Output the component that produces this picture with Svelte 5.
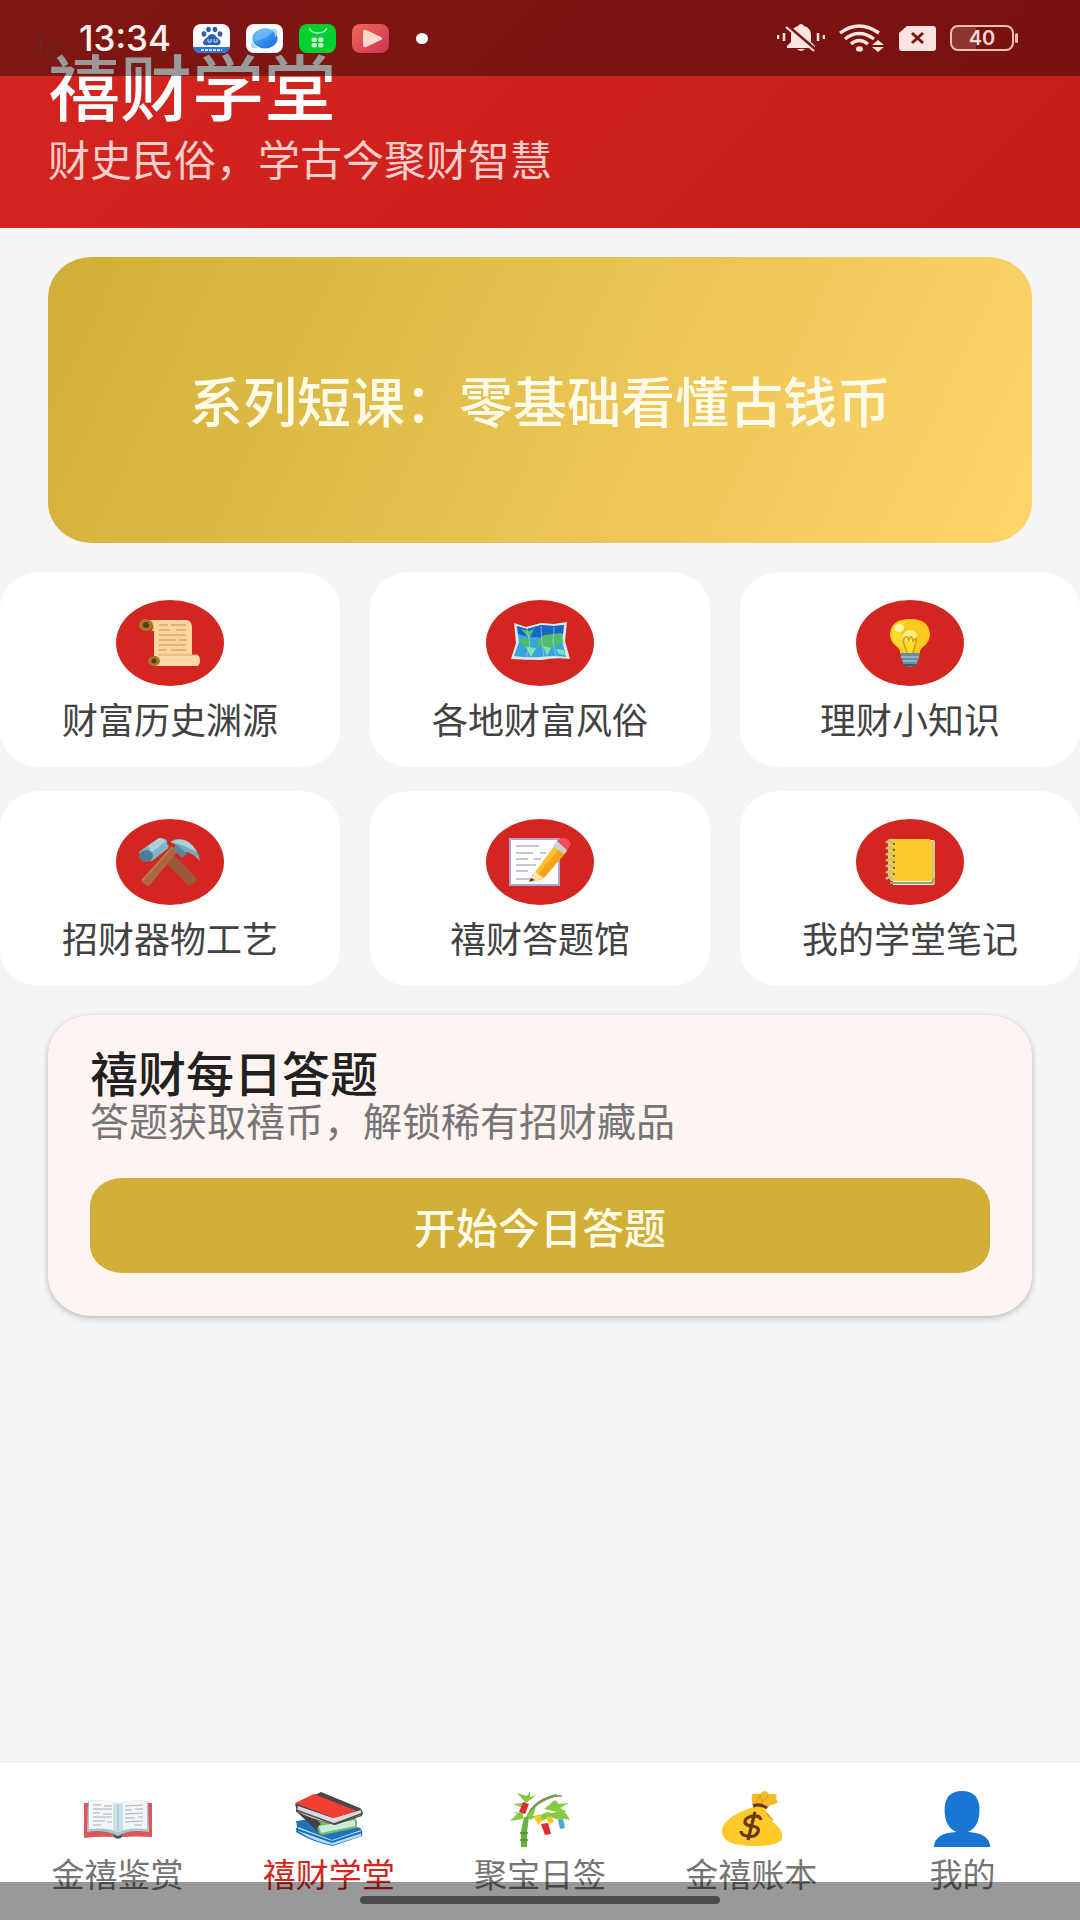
<script lang="ts">
  type Entry = { icon: string; label: string };

  const topics: Entry[] = [
    { icon: 'scroll', label: '财富历史渊源' },
    { icon: 'map', label: '各地财富风俗' },
    { icon: 'bulb', label: '理财小知识' },
    { icon: 'tools', label: '招财器物工艺' },
    { icon: 'memo', label: '禧财答题馆' },
    { icon: 'notebook', label: '我的学堂笔记' }
  ];

  const tabs: Entry[] = [
    { icon: 'book', label: '金禧鉴赏' },
    { icon: 'books', label: '禧财学堂' },
    { icon: 'bamboo', label: '聚宝日签' },
    { icon: 'bag', label: '金禧账本' },
    { icon: 'person', label: '我的' }
  ];

  let active = $state('books');
</script>

<div class="page">
  <div class="status">
    <span class="ghost">1e</span>
    <div class="status-left">
      <span class="time">13:34</span>
      <svg class="app" viewBox="0 0 37 29" aria-hidden="true">
        <rect width="37" height="29" rx="8" fill="#fff" />
        <path d="M0 23h37q-1 6-8 6H8q-7 0-8-6z" fill="#2f72d8" />
        <path d="M8 26h21" stroke="#cfe0ff" stroke-width="2" stroke-dasharray="3 1" />
        <g fill="#2b5fb0">
          <ellipse cx="11" cy="10" rx="2.4" ry="2.8" />
          <ellipse cx="15.5" cy="5.5" rx="2.3" ry="2.7" />
          <ellipse cx="22" cy="5.5" rx="2.3" ry="2.7" />
          <ellipse cx="27" cy="10" rx="2.4" ry="2.8" />
          <path d="M19 10c3 0 4 3 7 5 4 4 0 7-3 6h-8c-4 1-7-2-3-6 3-2 4-5 7-5z" />
        </g>
        <path d="M15 15v3h3v-3M21 15v3h3v-3" fill="none" stroke="#dfe8ff" stroke-width="1" />
      </svg>
      <svg class="app" viewBox="0 0 37 29" aria-hidden="true">
        <defs>
          <linearGradient id="globe" x1="0" y1="0" x2="1" y2="1">
            <stop offset="0" stop-color="#5cbcff" />
            <stop offset="1" stop-color="#1668dc" />
          </linearGradient>
        </defs>
        <rect width="37" height="29" rx="8" fill="#fff" />
        <ellipse cx="19" cy="14.5" rx="12.5" ry="10" fill="url(#globe)" />
        <path d="M29 5q4 1 1 7-2 3-1-1-1-4-4-6zM7 17q0 5 5 7-7 1-7-2 0-2 2-5z" fill="#9ed6ff" />
        <path d="M8 17Q20 16 28 7q-5-4-11-3Q8 7 8 17z" fill="#7cc8ff" opacity=".6" />
      </svg>
      <svg class="app" viewBox="0 0 37 29" aria-hidden="true">
        <rect width="37" height="29" rx="8" fill="#06cf31" />
        <path d="M10 4q2 5 9 5t9-5" fill="none" stroke="#b9f5c5" stroke-width="1.3" />
        <g fill="#c9fbd2">
          <rect x="12.5" y="13.5" width="5.500" height="4.500" rx="2" />
          <rect x="19" y="13.5" width="5.500" height="4.500" rx="2" />
          <rect x="12.5" y="19" width="5.500" height="4.500" rx="2" />
          <rect x="19" y="19" width="5.500" height="4.500" rx="2" />
        </g>
      </svg>
      <svg class="app" viewBox="0 0 37 29" aria-hidden="true">
        <defs>
          <linearGradient id="play" x1="0" y1="0" x2="1" y2="1">
            <stop offset="0" stop-color="#ee6a55" />
            <stop offset="1" stop-color="#cf3156" />
          </linearGradient>
        </defs>
        <rect width="37" height="29" rx="8" fill="url(#play)" />
        <path d="M11 8q0-3 3-2l15 7q2 2 0 3l-15 7q-3 1-3-2z" fill="#ffd9cc" />
      </svg>
      <span class="dot"></span>
    </div>
    <div class="status-right">
      <svg width="48" height="28" viewBox="0 0 48 28" aria-hidden="true">
        <path d="M24 0q2 0 3 2 7 2 7 9v7l4 4v2H10v-2l4-4v-7q0-7 7-9 1-2 3-2zM20 25h8q-4 4-8 0z" fill="#fbe3e0" />
        <path d="M12 3 40 27" stroke="#7d1511" stroke-width="3" />
        <path d="M9 3 37 27" stroke="#fbe3e0" stroke-width="2" />
        <path d="M1 11v4M7 9v8M41 9v8M47 11v4" stroke="#fbe3e0" stroke-width="2.5" />
      </svg>
      <svg width="46" height="28" viewBox="0 0 46 28" aria-hidden="true">
        <g fill="none" stroke="#fbe3e0" stroke-width="3.4">
          <path d="M1 9Q20-5 40 9" />
          <path d="M6 15Q20 4 35 15" />
          <path d="M12 20q8-7 17 0" />
        </g>
        <ellipse cx="20.5" cy="25" rx="3.5" ry="2.7" fill="#fbe3e0" />
        <path d="m39 16 6 5H33zM39 28l6-5H33z" fill="#fbe3e0" />
      </svg>
      <svg width="37" height="25" viewBox="0 0 37 25" aria-hidden="true">
        <path d="M8 0h26q3 0 3 3v19q0 3-3 3H3q-3 0-3-3V7z" fill="#fbe3e0" />
        <path d="m13 7 11 10M24 7 13 17" stroke="#7d1511" stroke-width="3" />
      </svg>
      <span class="battery">40</span>
    </div>
  </div>

  <header class="header">
    <h1>禧财学堂</h1>
    <p>财史民俗，学古今聚财智慧</p>
  </header>

  <main class="content">
    <a class="banner" href="#course">系列短课：零基础看懂古钱币</a>

    <section class="topics">
      {#each topics as topic}
        <button class="topic">
          <span class="disc">
            <svg width="62" height="50" viewBox="0 0 62 50" aria-hidden="true">
              {#if topic.icon === 'scroll'}
                <path d="M7 2h41q5 1 5 8v28H15V9q-1-5-8-7z" fill="#fbd59f" />
                <ellipse cx="7" cy="7" rx="7" ry="6" fill="#a8752f" />
                <ellipse cx="7" cy="7" rx="3" ry="3" fill="#5b3b1c" />
                <path d="M8 2q6 0 6 6t-4 5h5V8q-1-5-7-6z" fill="#efb974" />
                <path d="M16 37h42q3 0 3 6 0 5-4 5H16q5-5 0-11z" fill="#ffd9a6" />
                <ellipse cx="15" cy="43" rx="6" ry="5" fill="#a8752f" />
                <ellipse cx="15" cy="43" rx="2.5" ry="2.5" fill="#5b3b1c" />
                <path d="M20 7h9m3 0h15M20 12h11m6 0h10M20 17h27M20 22h17m3 0h8M20 27h27M20 32h8m4 0h15" stroke="#d3a871" stroke-width="1.5" />
                <path d="M19 37h40" stroke="#e0a762" />
              {:else if topic.icon === 'map'}
                <path d="m5 5 12 4 15-4 13 1 13-2-2 19 5 18q-15-2-28 1-16 0-31-1l5-16z" fill="#d8e8ee" />
                <path d="m8 8 10 3 14-4 13 1 10-1-2 15 4 17q-12-2-25 0-14 1-27-1l5-14z" fill="#3aa5dd" />
                <path d="m8 8 10 3 14-4 13 1 10-1-1 9q-24 7-45 0z" fill="#1767c7" />
                <path d="m12 11 8 2 5-2-4 9-4-3zM9 22l8-2 5 4-2 4-5 2-3-6zM29 22l6-5 9-1 9-1 1 10-8 2-4 4-6-3-8 1z" fill="#51bd6c" />
                <path d="m17 29 10 1-5 9zM34 28l8 2-4 8zM47 31l8 1 1 5-6-1z" fill="#7fe3b1" />
                <path d="m18 11 3 15-4 14M32 8l1 17 2 14M45 9l-1 15 3 14" fill="none" stroke="#b9e6f5" opacity=".5" />
              {:else if topic.icon === 'bulb'}
                <path d="M31 1q19 0 20 15 0 8-7 13-4 3-3 7H21q1-4-3-7-7-5-7-13Q12 1 31 1z" fill="#fcc81d" />
                <path d="M31 2Q14 3 13 17q1 8 8 12l5 6h7q5-8 3-17-4 5-9-1-6 1-5-4Q25 5 31 2z" fill="#ffe13b" opacity=".7" />
                <ellipse cx="20" cy="10" rx="5" ry="4" fill="#fff6a0" />
                <ellipse cx="31" cy="18" rx="7" ry="6" fill="#ffed80" />
                <path d="m28 35-4-12q4-9 6 0 2-9 4 0 5-6 3 1l-3 11" fill="none" stroke="#d99716" stroke-width="1.5" />
                <path d="M21 35h20l-3 11q-7 6-14 0z" fill="#668fa5" />
                <path d="M22 39h18M24 43h14" stroke="#9ebfcd" stroke-width="1.5" />
                <path d="M25 47h12" stroke="#3c5a6c" stroke-width="2" />
              {:else if topic.icon === 'tools'}
                <path d="m31 16 8 6 19 20q-4 7-9 6L25 24z" fill="#9a5a3a" />
                <path d="m39 14-6-5L2 43q3 5 8 6z" fill="#ad6843" />
                <path d="M33 10 4 43" stroke="#c27a4f" stroke-width="1.5" />
                <path d="M8 9 20 1q10 0 8 6 4 3-1 6L13 24q-12 0-13-9z" fill="#81b4c5" />
                <ellipse cx="7" cy="19" rx="7" ry="6" fill="#4d7c91" />
                <path d="m9 9 11-8q6 0 6 4L13 15z" fill="#a9d1da" />
                <path d="M31 5q7-6 17 0 11 5 13 19-7-8-14-9l-5 4-7-7 2-4z" fill="#79a8ba" />
                <path d="M32 5q12-6 21 3l5 7-15-7z" fill="#abd0db" />
                <path d="m38 8 10 9-5 4-9-9z" fill="#5b869a" />
              {:else if topic.icon === 'memo'}
                <path d="M0 1h51v48H0z" fill="#b4a1cc" />
                <path d="M2 3h47v44H2z" fill="#fff" />
                <path d="M7 9h23M7 16h17m7 0h6M7 22h12m6 0h7M7 28h20M7 34h12M7 42h17" stroke="#aeb5c1" stroke-width="1.5" />
                <path d="m23 39 23-31 12 6-24 28-12 3z" fill="#fbc12c" />
                <path d="m27 40 24-29 7 3-24 28z" fill="#f3a31b" />
                <path d="m26 35 9 6-14 4z" fill="#ffe7b6" />
                <path d="m22 41 4 2-6 2z" fill="#3b4043" />
                <path d="m44 9 5-6 11 7-5 7z" fill="#c9d3d8" />
                <path d="m48 4 4-3q8-1 10 6l-4 6z" fill="#ee4c5c" />
              {:else}
                <path d="M11 3h44v45H14z" fill="#f4f1df" />
                <path d="M52 4h4v43h-4z" fill="#d9c482" />
                <path d="M10 2h39q4 0 4 5v33q0 4-4 4H12l-3-4V6q0-4 1-4z" fill="#ffca2b" />
                <path d="M11 46h41q3 0 3-5" fill="none" stroke="#91a56f" stroke-width="2" />
                <path d="M7 6q4-4 8 1M7 12q4-4 8 1M7 18q4-4 8 1M7 24q4-4 8 1M7 30q4-4 8 1M7 36q4-4 8 1M7 42q4-4 7 1" fill="none" stroke="#c3bd96" stroke-width="2.5" />
                <path d="M14 7h2m-2 6h2m-2 6h2m-2 6h2m-2 6h2m-2 6h2" stroke="#806b2e" stroke-width="2" />
              {/if}
            </svg>
          </span>
          <span class="topic-label">{topic.label}</span>
        </button>
      {/each}
    </section>

    <section class="quiz">
      <h2>禧财每日答题</h2>
      <p>答题获取禧币，解锁稀有招财藏品</p>
      <button class="start">开始今日答题</button>
    </section>
  </main>

  <nav class="tabs">
    {#each tabs as tab}
      <a
        class="tab"
        class:active={active === tab.icon}
        href="#{tab.icon}"
        onclick={() => (active = tab.icon)}
      >
        <svg width="70" height="56" viewBox="0 0 70 56" aria-hidden="true">
          {#if tab.icon === 'book'}
            <path d="M1 12h68v34q-18-1-30 0-4 3-8 0-15-1-30 1z" fill="#d9595a" />
            <path d="M5 10q16-2 30 2 14-4 30-2l1 31q-17-3-27 2-4 4-8 0-12-5-27-2z" fill="#a9c3cf" />
            <path d="M6 10q16-2 29 2v29Q25 36 6 38zM64 10q-16-2-29 2v29q10-5 29-3z" fill="#f1f6f7" />
            <path d="M30 12q5 2 10 0v27q-5 4-10 0z" fill="#cbe1e8" />
            <path d="M35 13v27" stroke="#9dbbc7" />
            <path d="M10 14h8m3 1h8M10 18h19M10 22h7m3 1h9M10 26h19M10 30h12m2 1h5M10 34h8M42 15l18-1M42 19h7m3-1h8M42 23l18-1M42 27h10m3-1h5M42 31l18-1M51 34h8" stroke="#a9afb3" />
            <path d="M31 43q4 4 8 0v3q-4 3-8 0z" fill="#2e646b" />
          {:else if tab.icon === 'books'}
            <path d="m2 30 30-4 34 11q3 2 2 8L39 55Q18 51 2 41q2-4 0-11z" fill="#1f73ba" />
            <path d="m4 36 34 13 29-10v6L39 54Q18 50 4 40z" fill="#b7defa" />
            <path d="m2 38 36 13 30-10" fill="none" stroke="#226fae" stroke-width="2" />
            <path d="m14 26 46-1q5 5 2 12L29 44q-7-2-6-7z" fill="#77b867" />
            <path d="m25 35 36-6v6l-34 7z" fill="#c6eed8" />
            <path d="M4 22 25 42q-4-6 2-9L18 24z" fill="#473f42" />
            <path d="M1 13 27 1l39 16q4 3 2 8L41 34Q16 28 2 21q1-4-1-8z" fill="#4b474b" />
            <path d="m4 15 35 12 28-8v5l-27 9Q16 28 3 20z" fill="#d9d9dc" />
            <path d="M1 12 20 3l43 17-23 7z" fill="#f23d32" />
            <path d="M2 19 40 33l27-10" fill="none" stroke="#504c50" stroke-width="1.5" />
          {:else if tab.icon === 'bamboo'}
            <path d="M20 56V38q1-26 32-34" fill="none" stroke="#74ad3f" stroke-width="2.5" />
            <path d="M16 56V40l3-14h5l-2 15v15z" fill="#6fae43" />
            <path d="M15 42h8M15 49h8" stroke="#4b8e2c" stroke-width="1.5" />
            <path d="M25 20Q36 4 57 5" fill="none" stroke="#7d8f69" stroke-width="1.5" />
            <path d="m21 12-9-10 10 3 3-5v6l6-2-6 5zM18 17 8 13l9-1 5 4zM18 28 5 30l7-7-4-2 10 1zM22 24l9-8-3 9 7-1-10 5zM39 18l11-9 4 4 10-1-9 5 7 4-14-1zM31 26l11-5 8 2 13 3-9 3-9-3-8 4zM43 24l14-6 5 6 3 5-9-2z" fill="#84cb42" />
            <path d="m18 11 6 2-4 10-6-2z" fill="#d92c31" />
            <path d="m36 33 7-1 3 11-6 1z" fill="#d92c31" />
            <path d="m29 26 5-3 4 6-5 5zM41 26l6-1 2 6-5 2z" fill="#f8c929" />
            <path d="m53 29 5-1 2 9-5 1z" fill="#46acd5" />
          {:else if tab.icon === 'bag'}
            <path d="M37 16q6-1 12 1 3 10 11 17 7 5 6 12 0 9-28 9Q6 55 6 40q0-13 31-24z" fill="#ffc929" />
            <path d="M37 15q-2-7-1-12 6-1 8 0 5-6 9 0 5-1 8 1-2 4 1 7-3 3-8 3l-3 4z" fill="#f7bb28" />
            <path d="m40 11 4-7 2 7 6-6" fill="none" stroke="#dc961b" />
            <path d="M37 15q7-3 14 2" fill="none" stroke="#65391e" stroke-width="3" />
            <path d="M51 22q2 4 6 7" fill="none" stroke="#dc961b" stroke-width="1.5" />
            <path d="M45 29q-1-5-9-4-8 2-7 7 2 3 7 3 8 1 6 6-3 6-11 4-6-1-6-5M39 21 32 49" fill="none" stroke="#65391e" stroke-width="3.2" />
          {:else}
            <path d="M35 0q21 0 21 19 0 17-14 22 26 1 27 15H1q1-14 27-15-14-5-14-22Q14 0 35 0z" transform="translate(6 0) scale(.83 1)" fill="#1976d2" />
          {/if}
        </svg>
        <span>{tab.label}</span>
      </a>
    {/each}
  </nav>

  <div class="gesture"><span></span></div>
</div>

<style>
  :global(body) {
    margin: 0;
    background: #f5f5f5;
    font-family: 'Noto Sans CJK SC', sans-serif;
  }
  .page {
    position: relative;
    min-height: 100vh;
    display: flex;
    flex-direction: column;
  }
  h1,
  h2,
  p {
    margin: 0;
    font-weight: 400;
  }
  button {
    border: none;
    padding: 0;
    font-family: inherit;
    cursor: pointer;
  }
  a {
    text-decoration: none;
  }

  /* system bars float over the app */
  .status {
    position: absolute;
    inset: 0 0 auto;
    height: 76px;
    box-sizing: border-box;
    padding: 0 61px 0 79px;
    display: flex;
    align-items: center;
    justify-content: space-between;
    background: rgba(0, 0, 0, 0.4);
    font-family: Inter, sans-serif;
    color: #fdf0ee;
  }
  .ghost {
    position: absolute;
    left: 34px;
    top: 36px;
    font-size: 28px;
    line-height: 24px;
    color: rgba(90, 50, 45, 0.4);
  }
  .status-left,
  .status-right {
    display: flex;
    align-items: center;
  }
  .status-left {
    gap: 16px;
  }
  .time {
    font-size: 35px;
    line-height: 32px;
    font-weight: 500;
    margin-right: 6px;
  }
  .app {
    width: 37px;
    height: 29px;
  }
  .dot {
    width: 12px;
    height: 11px;
    border-radius: 50%;
    background: #fff;
    margin-left: 11px;
  }
  .status-right {
    gap: 14px;
  }
  .battery {
    position: relative;
    width: 64px;
    height: 26px;
    box-sizing: border-box;
    border: 2px solid #f0bcb6;
    border-radius: 8px;
    background: linear-gradient(90deg, #8f3430 40%, transparent 40%);
    font-size: 20px;
    font-weight: 600;
    line-height: 22px;
    text-align: center;
    color: #f8d8d4;
    margin-right: 5px;
  }
  .battery::after {
    content: '';
    position: absolute;
    right: -6px;
    top: 6px;
    width: 3px;
    height: 10px;
    border-radius: 2px;
    background: #f0bcb6;
  }

  .header {
    padding: 54px 48px 46px;
    display: flex;
    flex-direction: column;
    gap: 20px;
    background: linear-gradient(135deg, #d32620, #c81c17);
    color: #fff;
  }
  h1 {
    font-size: 72px;
    line-height: 60px;
    font-weight: 500;
  }
  .header p {
    font-size: 42px;
    line-height: 48px;
    color: #f9cdca;
  }

  .content {
    padding: 29px 0;
    display: flex;
    flex-direction: column;
    gap: 29px;
  }
  .banner {
    margin: 0 48px;
    min-height: 286px;
    display: flex;
    align-items: center;
    justify-content: center;
    border-radius: 44px / 40px;
    background: linear-gradient(115deg, #d0af36, #ffd56c);
    color: #fffbe8;
    font-size: 54px;
    line-height: 60px;
    font-weight: 500;
  }
  .topics {
    display: grid;
    grid-template-columns: repeat(3, 1fr);
    gap: 24px 30px;
  }
  .topic {
    padding: 28px 0 29px;
    display: flex;
    flex-direction: column;
    align-items: center;
    gap: 12px;
    border-radius: 40px / 36px;
    background: #fff;
  }
  .disc {
    width: 108px;
    height: 86px;
    display: flex;
    align-items: center;
    justify-content: center;
    border-radius: 50%;
    background: #d32620;
  }
  .topic-label {
    font-size: 36px;
    line-height: 40px;
    color: #424242;
  }

  .quiz {
    margin: 0 48px;
    padding: 29px 42px 43px;
    border-radius: 44px / 40px;
    background: #fef4f2;
    box-shadow: 0 2px 6px rgba(0, 0, 0, 0.25);
  }
  h2 {
    font-size: 48px;
    line-height: 54px;
    font-weight: 500;
    color: #212121;
  }
  .quiz p {
    font-size: 39px;
    line-height: 42px;
    color: #757575;
  }
  .start {
    width: 100%;
    min-height: 95px;
    margin-top: 38px;
    border-radius: 32px / 28px;
    background: #d1ae35;
    color: #fffbe8;
    font-size: 42px;
    line-height: 48px;
    font-weight: 500;
  }

  .tabs {
    margin-top: auto;
    padding: 29px 12px;
    display: flex;
    border-top: 1px solid #e8e8e8;
    background: #fff;
  }
  .tab {
    flex: 1;
    display: flex;
    flex-direction: column;
    align-items: center;
    gap: 8px;
    font-size: 33px;
    line-height: 36px;
    color: #757575;
  }
  .tab.active {
    color: #d32620;
  }

  .gesture {
    position: absolute;
    inset: auto 0 0;
    height: 36px;
    padding-bottom: 2px;
    display: flex;
    align-items: center;
    justify-content: center;
    background: rgba(0, 0, 0, 0.4);
    pointer-events: none;
  }
  .gesture span {
    width: 360px;
    height: 8px;
    border-radius: 4px;
    background: #4d4d4d;
  }
</style>
